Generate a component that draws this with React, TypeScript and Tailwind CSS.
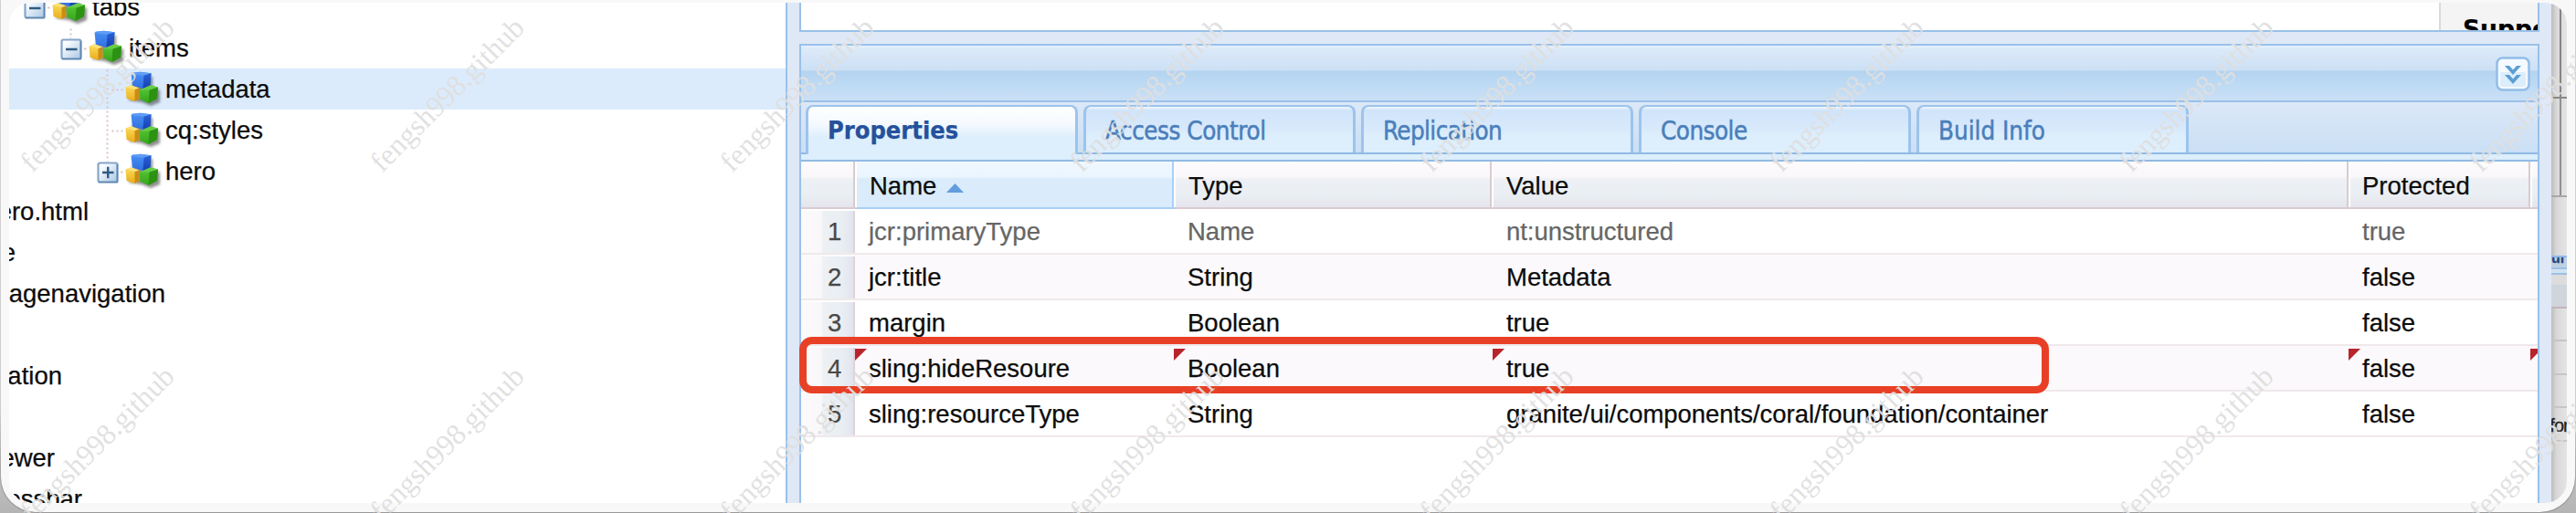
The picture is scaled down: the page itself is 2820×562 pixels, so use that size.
import React from "react";

const LINE = "#dcc3c6";

function Cubes() {
  return (
    <svg className="h-10 w-10 shrink-0 overflow-visible" viewBox="0 0 40 40">
      <defs>
        <linearGradient id="cubeBlueL" x1="0" y1="0" x2="0" y2="1"><stop offset="0" stopColor="#4a92f4" /><stop offset="1" stopColor="#2f6fe0" /></linearGradient>
        <linearGradient id="cubeBlueR" x1="0" y1="0" x2="0" y2="1"><stop offset="0" stopColor="#2a62d8" /><stop offset="1" stopColor="#163fb0" /></linearGradient>
        <linearGradient id="cubeYellowL" x1="0" y1="0" x2="0" y2="1"><stop offset="0" stopColor="#fbdd5a" /><stop offset="1" stopColor="#e9ac1c" /></linearGradient>
        <linearGradient id="cubeGreenR" x1="0" y1="0" x2="0" y2="1"><stop offset="0" stopColor="#59c93a" /><stop offset="1" stopColor="#36a51a" /></linearGradient>
        <filter id="cubeShadow" x="-30%" y="-30%" width="170%" height="170%"><feGaussianBlur stdDeviation="1.8" /></filter>
      </defs>
      <path d="M10 6h20v12l8 3v13l-10 4-10-4-14-2z" fill="#333" opacity="0.55" filter="url(#cubeShadow)" />
      <path d="M6.500 3 8 1.500 17 .8l11.500 1.500L27.500 16l-8 3L8 15.500z" fill="url(#cubeBlueL)" />
      <path d="M6.500 3.200 16 .8l12.500 1.500-8 2.500z" fill="#5f9cf5" />
      <path d="m20.500 4.800 8-2.500-1 13.700-8 3z" fill="url(#cubeBlueR)" />
      <path d="m.5 17.500 6-2 8.500 3 .5 11.500-5 3-9-3z" fill="url(#cubeYellowL)" />
      <path d="m10.500 20 4.500-1.500.5 11.500-5 3z" fill="#c98d14" />
      <path d="m.5 17.500 6-2 8.500 3-4.500 1.500z" fill="#fbe27a" />
      <path d="m15.500 21 12-5.500 8.500 2-1 12.500-9.500 5-9-4z" fill="url(#cubeGreenR)" />
      <path d="m26.500 20.500 9.500-3-1 12.500-9.500 5z" fill="#2c9212" />
      <path d="m16 20.500 11.500-5 8.500 2-9.500 3z" fill="#66cc46" />
    </svg>
  );
}

type Toggle = "minus" | "plus" | "none";

function Elbow({ toggle, down }: { toggle: Toggle; down?: boolean }) {
  return (
    <svg className="h-[45px] w-10 shrink-0" viewBox="0 0 40 45" fill="none">
      <defs>
        <linearGradient id="toggleFill" x1="0" y1="0" x2="1" y2="1"><stop offset="0.2" stopColor="#fbfdff" /><stop offset="1" stopColor="#a9c6e4" /></linearGradient>
      </defs>
      {down && <path d={toggle === "none" ? "M20.500 1.500V45" : "M20.500 1.500V12"} stroke={LINE} strokeWidth="2" strokeDasharray="2 3" />}
      {toggle === "none" ? (
        <path d="M25.500 23.500H38" stroke={LINE} strokeWidth="2" strokeDasharray="2 3" />
      ) : (
        <>
          <path d="M35 23.500h2.500" stroke={LINE} strokeWidth="2" />
          <rect x="10.500" y="13.500" width="21" height="21" rx="2" fill="url(#toggleFill)" stroke="#86a6c8" strokeWidth="2.2" />
          <path d="M11 34.500h20.500V15" stroke="#5f86b0" strokeWidth="1.500" />
          <path d="M15 24h12.500" stroke="#2f5b84" strokeWidth="2.4" />
          {toggle === "plus" && <path d="M21.200 17.800v12.500" stroke="#2f5b84" strokeWidth="2.4" />}
        </>
      )}
    </svg>
  );
}

function Node({ pad, label, toggle, down, selected }: { pad: string; label: string; toggle: Toggle; down?: boolean; selected?: boolean }) {
  return (
    <div className={`flex h-[45px] shrink-0 items-center leading-[45px] ${pad} ${selected ? "bg-[#dbebfc]" : ""}`}>
      <Elbow toggle={toggle} down={down} />
      <Cubes />
      <span className="ml-[4px]">{label}</span>
    </div>
  );
}

function CutNode({ width, label }: { width: string; label: string }) {
  return (
    <div className={`-mt-px mb-px flex h-[45px] shrink-0 justify-end whitespace-nowrap leading-[45px] ${width}`}>
      <span>{label}</span>
    </div>
  );
}

function Tree() {
  return (
    <div className="h-[548px] w-[850px] shrink-0 overflow-hidden bg-white">
      <div className="-mt-[18px] flex flex-col">
        <Node pad="pl-[7px]" label="tabs" toggle="minus" />
        <Node pad="pl-[47px]" label="items" toggle="minus" down />
        <Node pad="pl-[87px]" label="metadata" toggle="none" down selected />
        <Node pad="pl-[87px]" label="cq:styles" toggle="none" down />
        <Node pad="pl-[87px]" label="hero" toggle="plus" down />
        <CutNode width="w-[87px]" label="hero.html" />
        <CutNode width="w-[7px]" label="e" />
        <CutNode width="w-[171px]" label="pagenavigation" />
        <div className="h-[45px]" />
        <CutNode width="w-[58px]" label="navigation" />
        <div className="h-[45px]" />
        <CutNode width="w-[50px]" label="viewer" />
        <CutNode width="w-[80px]" label="progressbar" />
      </div>
    </div>
  );
}

function Tab({ label, active, text }: { label: string; active?: boolean; text: string }) {
  return (
    <div
      className={`mr-[6px] w-[298px] shrink-0 overflow-hidden rounded-t-[8px] border-x-[3px] border-t-2 border-[#9cc4ec] pl-[21px] leading-[52px] [font-family:'DejaVu_Sans_Condensed','DejaVu_Sans',sans-serif] ${text} ${
        active
          ? "h-[57px] bg-[linear-gradient(#ffffff_0%,#f4f9fe_35%,#e4f1fd_54%,#ddeefc_60%,#ddeefc_100%)] font-bold text-[#25519b]"
          : "h-[52px] bg-[linear-gradient(#eff6fd_0px,#d0e4fa_4px,#d8e9fb_24px,#ddeefc_32px,#ddeefc_100%)] text-[#4a7fbb] [-webkit-text-stroke:0.5px_#4a7fbb]"
      }`}
    >
      {label}
    </div>
  );
}

function HeadCell({ label, width, sorted }: { label: string; width: string; sorted?: boolean }) {
  return (
    <div
      className={`flex h-[52px] shrink-0 items-center border-b-2 pt-[4px] leading-[50px] ${width} ${
        sorted
          ? "border-[#a9d0f5] bg-[linear-gradient(#f0f8fe_0px,#eaf5fe_17px,#daebfc_19px,#daebfc_100%)]"
          : "border-[#dacbd0] bg-[linear-gradient(#fdfbfc_0px,#f9f7f9_17px,#edf0f4_19px,#eaeff3_36px,#e5e5ed_100%)]"
      }`}
    >
      <span className="grow pl-[13px]">{label}{sorted && (
        <svg className="ml-[11px] inline-block h-[10px] w-[19px]" viewBox="0 0 19 10"><path d="M9.500 0 19 10H0z" fill="#629ddd" /></svg>
      )}</span>
      <span className={`-mt-[4px] h-[50px] w-[2px] ${sorted ? "bg-[#a9d0f5]" : "bg-[#d8cbcf]"}`} />
      <span className="-mt-[4px] h-[50px] w-[2px] bg-white" />
    </div>
  );
}

function Dirty() {
  return (
    <svg className="absolute left-0 top-[3px] h-[13px] w-[13px]" viewBox="0 0 13 13"><path d="M0 0h13L0 13z" fill="#b8242b" /></svg>
  );
}

const rows = [
  { name: "jcr:primaryType", type: "Name", value: "nt:unstructured", prot: "true", muted: true },
  { name: "jcr:title", type: "String", value: "Metadata", prot: "false" },
  { name: "margin", type: "Boolean", value: "true", prot: "false" },
  { name: "sling:hideResoure", type: "Boolean", value: "true", prot: "false", dirty: true },
  { name: "sling:resourceType", type: "String", value: "granite/ui/components/coral/foundation/container", prot: "false" },
];

function Grid() {
  return (
    <div className="flex grow flex-col overflow-hidden bg-white">
      <div className="flex h-[52px] shrink-0">
        <HeadCell label="" width="w-[61px]" />
        <HeadCell label="Name" width="w-[349px] pl-[1px]" sorted />
        <HeadCell label="Type" width="w-[348px] pl-[1px]" />
        <HeadCell label="Value" width="w-[938px] pl-[1px]" />
        <HeadCell label="Protected" width="w-[199px]" />
        <HeadCell label="" width="w-[40px]" />
      </div>
      {rows.map((r, i) => (
        <div
          key={r.name}
          className={`flex h-[50px] shrink-0 border-b-2 border-[#efe9eb] leading-[46px] ${i % 2 ? "bg-[#fbf9fb]" : "bg-white"} ${r.muted ? "text-[#666]" : "text-[#0c0c0c]"}`}
        >
          <div className="mt-[2px] w-[59px] shrink-0 border-r-2 border-[#e0d2d6] bg-[linear-gradient(90deg,#fcfafb_0px,#f9f7f9_22px,#edf1f4_24px,#e9eef3_45px,#e2e4ed_100%)] pl-[29px] text-[#484848]">
            {i + 1}
          </div>
          <div className="relative w-[349px] shrink-0 pl-[15px] pt-[2px]">{r.dirty && <Dirty />}{r.name}</div>
          <div className="relative w-[349px] shrink-0 pl-[15px] pt-[2px]">{r.dirty && <Dirty />}{r.type}</div>
          <div className="relative w-[937px] shrink-0 pl-[15px] pt-[2px] tracking-[-0.03px]">{r.dirty && <Dirty />}{r.value}</div>
          <div className="relative w-[199px] shrink-0 pl-[15px] pt-[2px]">{r.dirty && <Dirty />}{r.prot}</div>
          <div className="relative w-[40px] shrink-0">{r.dirty && <Dirty />}</div>
        </div>
      ))}
    </div>
  );
}

function Workspace() {
  return (
    <div className="flex h-[548px] w-[1905px] shrink-0 flex-col overflow-hidden bg-[#dfe8f6]">
      <div className="flex h-[32px] shrink-0 justify-end overflow-hidden border-x-2 border-b-2 border-[#99c1e9] bg-white">
        <div className="h-[30px] w-[108px] border-l-2 border-[#dadada] bg-[#f4f4f4] pl-[24px] pt-[13px] text-[26.5px] font-bold leading-[32px] text-black [font-family:'DejaVu_Sans',sans-serif]">
          Support
        </div>
      </div>
      <div className="h-[13px] shrink-0" />
      <div className="flex grow flex-col overflow-hidden border-x-2 border-t-2 border-[#99c1ea]">
        <div className="flex h-[60px] shrink-0 items-center justify-end bg-[linear-gradient(#e6f1fc_0px,#dbe9f8_4px,#cce0f5_27px,#b4d3f0_28px,#bddaf4_42px,#cadff5_100%)] pr-[8px]">
          <svg className="mt-[2px] h-[38px] w-[38px]" viewBox="0 0 38 38" fill="none">
            <rect x="1.500" y="1.500" width="35" height="35" rx="6" fill="#f4faff" stroke="#93bde8" strokeWidth="2.5" />
            <rect x="5" y="17" width="28" height="16" rx="2" fill="#dcedfb" />
            <path d="M10 10h5l4 4.500 4-4.500h5l-9 10z M10 20h5l4 4.500 4-4.500h5l-9 10z" fill="#5b9fd3" />
          </svg>
        </div>
        <div className="h-[2px] shrink-0 bg-[#99c1ea]" />
        <div className="flex h-[57px] shrink-0 border-b-2 border-[#91bae4] bg-[linear-gradient(#dce8f7,#cadff5)] pl-[5px] pt-[3px]">
          <Tab label="Properties" active text="text-[27px] tracking-[0px]" />
          <Tab label="Access Control" text="text-[27.5px] tracking-[-0.45px]" />
          <Tab label="Replication" text="text-[27.5px] tracking-[-0.6px]" />
          <Tab label="Console" text="text-[27.5px] tracking-[-0.5px]" />
          <Tab label="Build Info" text="text-[27.5px] tracking-[0px]" />
        </div>
        <div className="h-[6px] shrink-0 bg-[#ddeefc]" />
        <div className="h-[2px] shrink-0 bg-[#91bae4]" />
        <Grid />
      </div>
    </div>
  );
}

function Backdrop() {
  return (
    <div className="flex h-[548px] w-[17px] shrink-0 flex-col overflow-hidden bg-[linear-gradient(90deg,#bdbdbd,#d9d9d9_35%,#e4e4e4)]">
      <div className="ml-[9px] h-[103px] w-[2px] shrink-0 bg-[#858585]" />
      <div className="h-[2px] shrink-0 bg-[#888]" />
      <div className="ml-[9px] h-[106px] w-[2px] shrink-0 bg-[#909090]" />
      <div className="h-[2px] shrink-0 bg-[#a8a8a8]" />
      <div className="h-[64px] shrink-0" />
      <div className="h-[13px] shrink-0 overflow-hidden border-t-2 border-[#8fb8e4] bg-[#bed0e4] text-[16px] font-bold leading-[1px] text-[#28487c]">ur</div>
      <div className="h-[8px] shrink-0 border-y-2 border-[#9cc0e6] bg-[#d4e2f0]" />
      <div className="h-[37px] shrink-0 border-b-2 border-[#bfb6b8] bg-[linear-gradient(#dcdcde_30%,#cfd5da_32%)]" />
      <div className="h-[36px] shrink-0 border-b-2 border-[#c8c4c4]" />
      <div className="h-[37px] shrink-0 border-b-2 border-[#c8c4c4]" />
      <div className="h-[36px] shrink-0 border-b-2 border-[#c8c4c4]" />
      <div className="flex h-[37px] shrink-0 justify-center border-b-2 border-[#c8c4c4] text-[20px] leading-[39px] tracking-[-1px] text-[#222] [-webkit-text-stroke:0.3px_#222]">for</div>
    </div>
  );
}

function Watermarks() {
  const marks = [0, 1].flatMap((r) => [0, 1, 2, 3, 4, 5, 6, 7].map((c) => ({ x: 34.5 + c * 383, y: 189.5 + r * 382.7 })));
  return (
    <div className="pointer-events-none absolute inset-0 overflow-hidden">
      {marks.map((m, i) => (
        <span
          key={i}
          className="absolute whitespace-nowrap text-[32px] leading-[32px] text-[#dfdfdf]/95 [-webkit-text-stroke:0px] [font-family:'Liberation_Serif',serif]"
          style={{ left: m.x, top: m.y - 26.8, transformOrigin: "0 26.8px", transform: "rotate(-45deg)" }}
        >
          fengsh998.github
        </span>
      ))}
    </div>
  );
}

export default function App() {
  return (
    <div className="relative h-[562px] w-[2820px] overflow-hidden bg-[linear-gradient(#f4f4f6_0%,#f0f0f2_80%,#c2c2c2_92%,#b4b4b4_100%)] text-[27.5px] text-[#0c0c0c] [-webkit-text-stroke:0.25px] [font-family:'Liberation_Sans',Arial,sans-serif]">
      <div className="mx-[1px] h-[561px] rounded-b-[38px] bg-[#f8f8f9] pl-[9px] pt-[3px] shadow-[0_0_2px_rgba(0,0,0,0.55)]">
        <div className="flex h-[548px] w-[2800px] overflow-hidden rounded-[24px]">
          <Tree />
          <div className="w-[2px] shrink-0 bg-[#99c1ea]" />
          <div className="w-[13px] shrink-0 bg-[#dfe8f6]" />
          <Workspace />
          <div className="w-[13px] shrink-0 bg-[#dfe8f6]" />
          <Backdrop />
        </div>
      </div>
      <div className="absolute left-[875px] top-[369px] h-[62px] w-[1368px] rounded-[14px] border-8 border-[#e84026]" />
      <Watermarks />
    </div>
  );
}
